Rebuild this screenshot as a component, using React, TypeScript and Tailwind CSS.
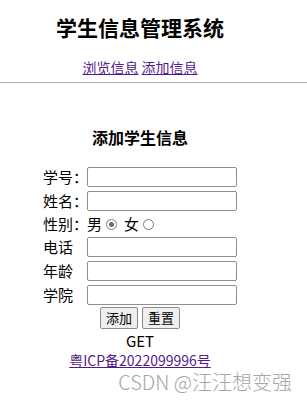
const font = { fontFamily: '"Noto Sans CJK SC", "Noto Sans", sans-serif' };

const fields = [
  { label: "学号：", name: "sno" },
  { label: "姓名：", name: "sname" },
  { label: "性别：", name: "sex" },
  { label: "电话", name: "phone" },
  { label: "年龄", name: "age" },
  { label: "学院", name: "college" },
];

function Radio({ checked }: { checked?: boolean }) {
  return (
    <span className="inline-flex h-[11px] w-[11px] items-center justify-center rounded-full border border-[#7a7a7a] bg-white">
      {checked && <span className="h-[5px] w-[5px] rounded-full bg-[#6b6b6b]" />}
    </span>
  );
}

export default function App() {
  return (
    <div className="min-h-screen bg-white text-black" style={font}>
      <div className="w-[280px] text-center">
        <h1 className="pt-[10px] text-[21px] font-bold leading-[34px]">学生信息管理系统</h1>
        <div className="mt-[13px] text-[14px] leading-[20px]">
          <a href="#" className="text-[#551a8b] underline">浏览信息</a>{" "}
          <a href="#" className="text-[#551a8b] underline">添加信息</a>
        </div>
      </div>
      <div className="mt-[5px] border-t border-[#aaaaaa]" />

      <div className="w-[280px]">
        <h2 className="mt-[42px] text-center text-[16px] font-bold leading-[24px]">添加学生信息</h2>

        <div className="mt-[16px] flex flex-col pl-[43px] text-[15px]">
          {fields.map((f) =>
            f.name === "sex" ? (
              <div key={f.name} className="flex h-[22px] items-center">
                <span className="w-[44px] shrink-0 whitespace-nowrap leading-[20px]">{f.label}</span>
                <span className="flex items-center gap-[4px] whitespace-nowrap">
                  男 <Radio checked />
                  <span className="ml-[3px]">女</span> <Radio />
                </span>
              </div>
            ) : (
              <div key={f.name} className="flex h-[24px] items-center">
                <span className="w-[44px] shrink-0 whitespace-nowrap leading-[20px]">{f.label}</span>
                <input
                  name={f.name}
                  className="h-[20px] w-[150px] shrink-0 rounded-[2px] border border-[#8f8f8f] bg-white px-1 text-[13px] outline-none"
                />
              </div>
            )
          )}
        </div>

        <div className="flex h-[24px] items-start justify-center gap-[4px] text-[13px]">
          <button className="h-[22px] w-[38px] rounded-[2px] border border-[#8a8a8a] bg-[#efefef] leading-[20px]">添加</button>
          <button className="h-[22px] w-[38px] rounded-[2px] border border-[#8a8a8a] bg-[#efefef] leading-[20px]">重置</button>
        </div>

        <div className="text-center text-[15px] leading-[20px]">GET</div>
        <div className="text-center text-[14px] leading-[19px]">
          <a href="#" className="text-[#551a8b] underline">粤ICP备2022099996号</a>
        </div>
      </div>

      <div className="mt-[2px] pr-[15px] text-right text-[20px] font-light leading-[20px] text-[#a6a6a6]">CSDN @汪汪想变强</div>
    </div>
  );
}
